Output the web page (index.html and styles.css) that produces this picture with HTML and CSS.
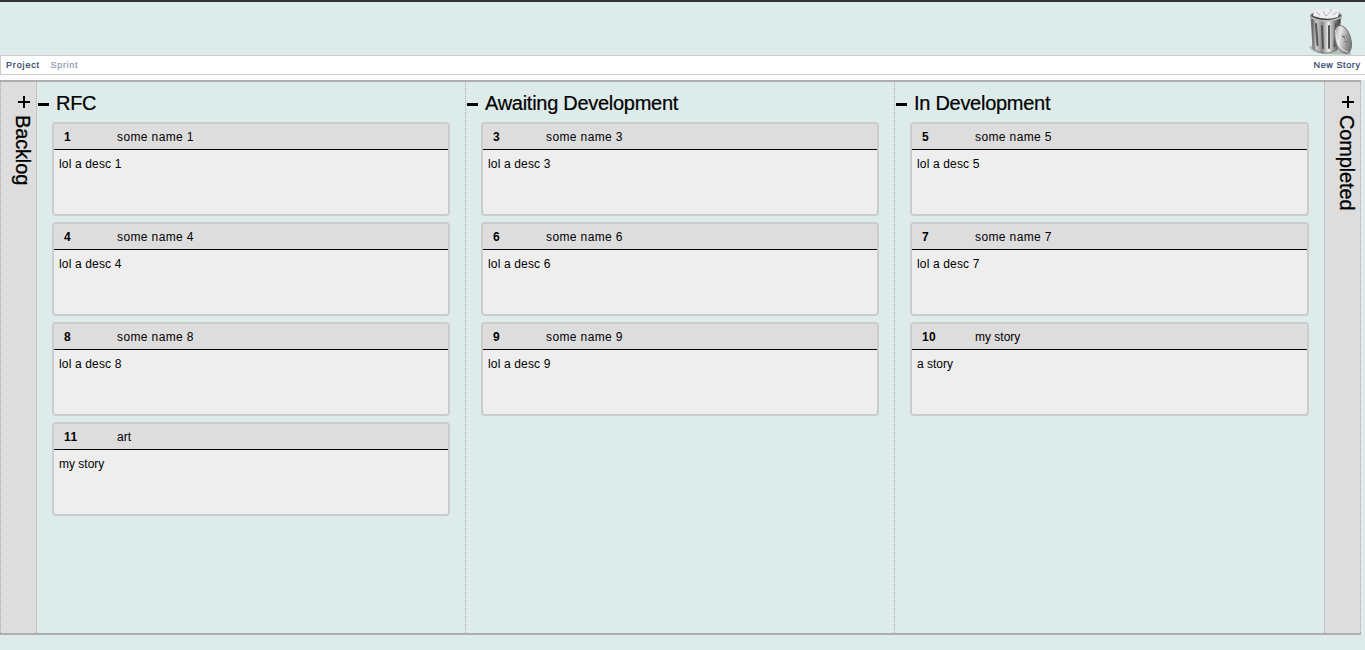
FILE: index.html
```
<!DOCTYPE html>
<html lang="en">
<head>
<meta charset="utf-8">
<title>Story board</title>
<link rel="stylesheet" href="styles.css">
</head>
<body>
<header class="header">
  <svg class="trash" width="48" height="48" viewBox="0 0 48 48">
    <defs>
      <linearGradient id="can"><stop offset="0" stop-color="#444"/><stop offset=".18" stop-color="#ccc"/><stop offset=".38" stop-color="#888"/><stop offset=".58" stop-color="#eee"/><stop offset=".82" stop-color="#777"/><stop offset="1" stop-color="#333"/></linearGradient>
      <linearGradient id="lid" x1="0" y1="0" x2="1" y2="1"><stop offset="0" stop-color="#777"/><stop offset=".35" stop-color="#e8e8e8"/><stop offset=".65" stop-color="#999"/><stop offset="1" stop-color="#555"/></linearGradient>
    </defs>
    <path d="M1 38Q3 45 18 46L43 47Q44 43 35 39Z" fill="#74807f" opacity=".4"/>
    <path d="M3 8L5 41Q16 49 29 42L33 8Z" fill="url(#can)" stroke="#666" stroke-width=".7"/>
    <g fill="none" stroke="#555" stroke-width="2" stroke-linecap="round"><path d="M8 16L9.500 37M14 18L15 40M21 18L21 40M28 16L26.500 38"/></g>
    <ellipse cx="18" cy="8" rx="15.500" ry="4.700" fill="#444" stroke="#999" stroke-width="1.200"/>
    <path d="M5 8L6 3L11 1L15 2L19 0L23 2L29 1L31 6L30 9Q19 13 5 8Z" fill="#ededf2"/>
    <path d="M8 4L12 7M15 3L18 8L22 4M25 7L29 4M22 1L24 4" fill="none" stroke="#a8a8b6" stroke-width=".9"/>
    <path d="M2.500 9Q17 17 33.500 9" fill="none" stroke="#bbb" stroke-width="1.500"/>
    <ellipse cx="35" cy="31.500" rx="7.800" ry="14.400" transform="rotate(-17 35 31.500)" fill="url(#lid)" stroke="#777" stroke-width="1"/>
    <path d="M27.500 22Q29 42 40 44" fill="none" stroke="#eee" stroke-width=".8"/>
    <path d="M34 28Q39 27 38 34" fill="none" stroke="#666" stroke-width="2.600"/>
    <path d="M34 27Q39 27 38 33" fill="none" stroke="#eee" stroke-width="1"/>
  </svg>
</header>
<nav class="nav"><span class="project">Project</span><span class="sprint">Sprint</span><span class="new">New Story</span></nav>
<div class="strip"></div>
<main class="board">
  <section class="side"><i class="plus"></i><h2 class="vertical">Backlog</h2></section>
  <section class="column">
    <h2 class="title"><i class="minus"></i>RFC</h2>
    <article class="card"><h3 class="head"><b class="id">1</b>some name 1</h3><p class="desc">lol a desc 1</p></article>
    <article class="card"><h3 class="head"><b class="id">4</b>some name 4</h3><p class="desc">lol a desc 4</p></article>
    <article class="card"><h3 class="head"><b class="id">8</b>some name 8</h3><p class="desc">lol a desc 8</p></article>
    <article class="card"><h3 class="head tight"><b class="id">11</b>art</h3><p class="desc tight">my story</p></article>
  </section>
  <section class="column">
    <h2 class="title"><i class="minus"></i>Awaiting Development</h2>
    <article class="card"><h3 class="head"><b class="id">3</b>some name 3</h3><p class="desc">lol a desc 3</p></article>
    <article class="card"><h3 class="head"><b class="id">6</b>some name 6</h3><p class="desc">lol a desc 6</p></article>
    <article class="card"><h3 class="head"><b class="id">9</b>some name 9</h3><p class="desc">lol a desc 9</p></article>
  </section>
  <section class="column last">
    <h2 class="title"><i class="minus"></i>In Development</h2>
    <article class="card"><h3 class="head"><b class="id">5</b>some name 5</h3><p class="desc">lol a desc 5</p></article>
    <article class="card"><h3 class="head"><b class="id">7</b>some name 7</h3><p class="desc">lol a desc 7</p></article>
    <article class="card"><h3 class="head tight"><b class="id">10</b>my story</h3><p class="desc tight">a story</p></article>
  </section>
  <section class="side"><i class="plus"></i><h2 class="vertical">Completed</h2></section>
</main>
</body>
</html>
```
FILE: styles.css
```
* { box-sizing: border-box; }
body { margin: 0; height: 650px; overflow: hidden; background: #ddebea; font-family: "Liberation Sans", Arial, sans-serif; font-size: 12px; color: #000; }
h2, h3, p { margin: 0; font-weight: normal; }
.header { height: 55px; border-top: 2px solid #333; display: flex; justify-content: flex-end; padding: 6px 9px 0 0; }
.trash { display: block; }
.nav { height: 20px; border: 1px solid #ccc; border-right: 0; background: #fff; display: flex; padding: 0 5px; font-size: 9px; line-height: 19px; color: #1f3864; -webkit-text-stroke: .2px; }
.project { letter-spacing: .85px; width: 44.5px; }
.sprint { letter-spacing: .7px; color: #8c9ab0; }
.new { margin-left: auto; letter-spacing: .6px; margin-right: -.5px; }
.strip { height: 5px; background: #fcfcfc; }
.board { box-sizing: content-box; width: 1361px; height: 551px; border-top: 2px solid #aeaeae; border-bottom: 2px solid #aeaeae; display: flex; }
.side { width: 37px; background: #ddd; border-left: 1px dotted #aaa; border-right: 1px dotted #aaa; display: flex; flex-direction: column; align-items: flex-end; padding: 14px 6px 0 0; }
.plus { width: 12px; height: 12px; background: linear-gradient(#000, #000) center / 12px 2px no-repeat, linear-gradient(#000, #000) center / 2px 12px no-repeat; }
.vertical { writing-mode: vertical-rl; font-size: 20px; line-height: 22px; margin: 7px -4px 0 0; letter-spacing: -.15px; -webkit-text-stroke: .3px; }
.column { width: 429px; border-right: 1px dotted #aaa; padding: 0 15px; }
.last { border-right: 0; }
.title { height: 40px; margin-left: -14px; display: flex; align-items: center; font-size: 20px; line-height: 24px; padding-top: 2px; white-space: nowrap; letter-spacing: -.28px; -webkit-text-stroke: .2px; }
.minus { width: 11px; height: 3px; background: #000; margin: 2px 7px 0 0; }
.card { height: 94px; border: 2px solid #ccc; border-radius: 4px; background: #eee; margin-bottom: 6px; }
.head { height: 26px; background: #ddd; border-bottom: 1px solid #000; display: flex; font-size: 12px; line-height: 27px; letter-spacing: .38px; }
.id { width: 63px; padding-left: 10px; }
.desc { padding: 6px 5px; line-height: 16px; letter-spacing: .15px; }
.head.tight, .desc.tight { letter-spacing: 0; }
.tight .id { letter-spacing: .4px; }
```
